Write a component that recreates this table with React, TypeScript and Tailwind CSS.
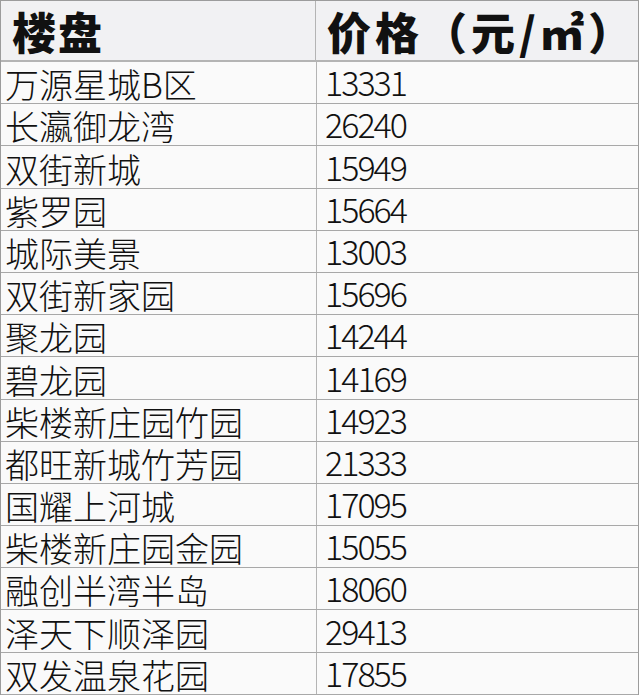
import React from "react";

const rows: [string, string][] = [
  ["万源星城B区", "13331"],
  ["长瀛御龙湾", "26240"],
  ["双街新城", "15949"],
  ["紫罗园", "15664"],
  ["城际美景", "13003"],
  ["双街新家园", "15696"],
  ["聚龙园", "14244"],
  ["碧龙园", "14169"],
  ["柴楼新庄园竹园", "14923"],
  ["都旺新城竹芳园", "21333"],
  ["国耀上河城", "17095"],
  ["柴楼新庄园金园", "15055"],
  ["融创半湾半岛", "18060"],
  ["泽天下顺泽园", "29413"],
  ["双发温泉花园", "17855"],
];

const light = {
  fontFamily:
    '"Noto Sans CJK SC Light", "Noto Sans CJK SC DemiLight", "Noto Sans CJK SC", "Noto Sans", sans-serif',
};
const bold = { fontFamily: '"Noto Sans CJK SC", "Noto Sans", sans-serif' };

export default function App() {
  return (
    <div className="w-[640px] h-[696px] overflow-hidden bg-white">
      <div className="w-[639px] border-t border-l border-r border-[#9c9c9c]">
        <div className="flex h-[61px] bg-[#f1f1f3] border-b-2 border-[#b4b4b4]" style={bold}>
          <div className="w-[316px] border-r border-[#b4b4b4] flex items-center pl-[11px] text-[44px] font-black text-[#111] leading-none tracking-[2px]">
            楼盘
          </div>
          <div className="flex-1 flex items-center pl-[11px] pr-[2px] text-[44px] font-black text-[#111] leading-none tracking-[4px] whitespace-nowrap">
            价格（元/㎡）
          </div>
        </div>
        {rows.map(([name, price]) => (
          <div
            key={name}
            className="flex h-[42.2px] bg-[#fafafa] border-b border-[#a8a8a8]"
            style={light}
          >
            <div className="w-[316px] border-r border-[#b4b4b4] flex items-end pl-[4px] pb-[2px] text-[34px] font-light text-[#111] leading-none">
              {name}
            </div>
            <div className="flex-1 flex items-end pl-[8px] pb-[4px] text-[34px] font-light text-[#111] leading-none tracking-[-2px]">
              {price}
            </div>
          </div>
        ))}
      </div>
    </div>
  );
}
